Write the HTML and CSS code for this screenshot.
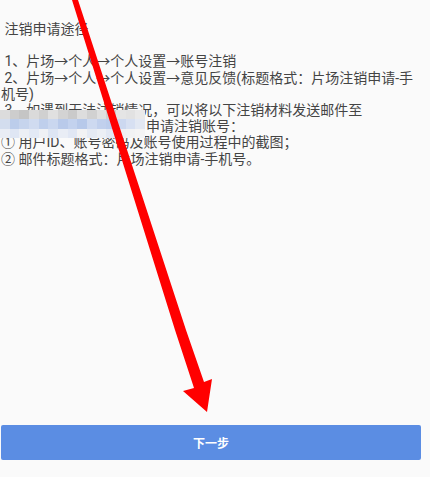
FILE: index.html
```html
<!DOCTYPE html>
<html lang="zh-CN">
<head>
<meta charset="utf-8">
<title>注销申请途径</title>
<link rel="stylesheet" href="styles.css">
</head>
<body>
<div class="page">
  <div class="content">
    <div class="line"> 注销申请途径</div>
    <div class="line"> </div>
    <div class="line"> 1、片场→个人→个人设置→账号注销</div>
    <div class="line"> 2、片场→个人→个人设置→意见反馈(标题格式：片场注销申请-手机号)</div>
    <div class="line"> 3、如遇到无法注销情况，可以将以下注销材料发送邮件至</div>
    <div class="line mail"><span class="mail-gap"></span>申请注销账号：<span class="blur">
      <i style="background:#dcdcdc"></i><i style="background:#cdcdcd"></i><i style="background:#c5c5c5"></i><i style="background:#dadada"></i><i style="background:#d0d0d0"></i><i style="background:#e0e0e0"></i><i style="background:#d3d3d3"></i><i style="background:#cacaca"></i><i style="background:#dddddd"></i><i style="background:#d1d1d1"></i><i style="background:#dfdfdf"></i><i style="background:#cfcfcf"></i><i style="background:#e5e5e5"></i><i style="background:#e2e2e2"></i><i style="background:#e9e9e9"></i>
      <i style="background:#d3ddee"></i><i style="background:#bccdeb"></i><i style="background:#c6d4ed"></i><i style="background:#d0dbf0"></i><i style="background:#bfcfec"></i><i style="background:#cad7ef"></i><i style="background:#b9caea"></i><i style="background:#c3d2ee"></i><i style="background:#b7c9ea"></i><i style="background:#cdd9f0"></i><i style="background:#c1d0ed"></i><i style="background:#bccdec"></i><i style="background:#ccd8f0"></i><i style="background:#d7e0f2"></i><i style="background:#e2e8f3"></i>
      <i style="background:#e9edf5"></i><i style="background:#dfe6f4"></i><i style="background:#eceff5"></i><i style="background:#e3e9f5"></i><i style="background:#eff1f5"></i><i style="background:#dde5f3"></i><i style="background:#e9edf5"></i><i style="background:#e1e7f4"></i><i style="background:#f2f2f4"></i><i style="background:#e5eaf4"></i><i style="background:#eceff5"></i><i style="background:#e2e8f4"></i><i style="background:#eff0f4"></i><i style="background:#f1f2f4"></i><i style="background:#f4f4f5"></i>
    </span></div>
    <div class="line">① 用户ID、账号密码及账号使用过程中的截图；</div>
    <div class="line">② 邮件标题格式：片场注销申请-手机号。</div>
  </div>
  <button class="next">下一步</button>
  <svg class="arrow" width="430" height="477" viewBox="0 0 430 477" aria-hidden="true">
    <polygon points="72,0 78,0 186,330 204,382 212,379 207,412 183,391 194,388 175,330" fill="#ff0000"/>
  </svg>
</div>
</body>
</html>
```

FILE: styles.css
```css
html, body {
  margin: 0;
  padding: 0;
  background: #fafafa;
}

.page {
  position: relative;
  width: 430px;
  height: 477px;
  box-sizing: border-box;
  padding: 21px 9px 17px 1px;
  display: flex;
  flex-direction: column;
  font-family: Roboto, "Noto Sans CJK SC", sans-serif;
  color: #444444;
  overflow: hidden;
}

.content {
  font-size: 14px;
  line-height: 16.2px;
}

.line {
  white-space: pre-wrap;
  min-height: 16.2px;
}

.mail {
  position: relative;
}

.mail-gap {
  display: inline-block;
  width: 145px;
}

.blur {
  position: absolute;
  left: -1px;
  top: -8px;
  width: 145px;
  height: 28px;
  display: grid;
  grid-template-columns: repeat(15, 1fr);
  grid-template-rows: 9px 10px 9px;
}

.blur i {
  display: block;
}

.next {
  margin-top: auto;
  height: 35px;
  width: 420px;
  border: none;
  border-radius: 2px;
  background: #5b8de3;
  color: #ffffff;
  font-family: Roboto, "Noto Sans CJK SC", sans-serif;
  font-size: 12px;
  font-weight: bold;
  padding: 0;
}

.arrow {
  position: absolute;
  left: 0;
  top: 0;
  pointer-events: none;
}
```
